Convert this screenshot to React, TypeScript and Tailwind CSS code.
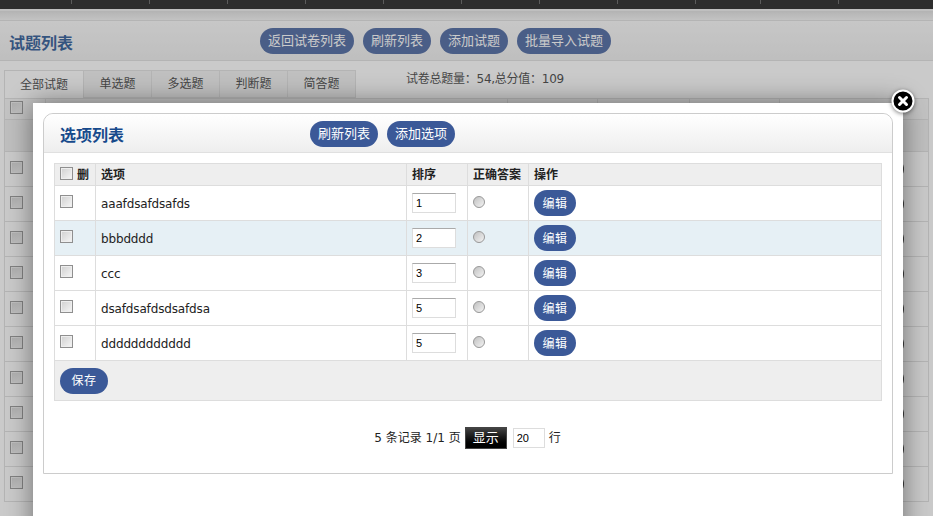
import React from "react";

const FONT = "[font-family:'DejaVu_Sans','Noto_Sans_CJK_SC',sans-serif]";

function Pill({ children, className = "" }: { children: React.ReactNode; className?: string }) {
  return (
    <button className={`h-[26px] rounded-[13px] bg-[#3b5998] px-2 leading-[26px] text-white ${className}`}>
      {children}
    </button>
  );
}

function Check() {
  return (
    <input
      type="checkbox"
      className="block h-[13px] w-[13px] appearance-none border border-[#8f8f8f] bg-gradient-to-br from-[#d0d0d0] to-[#f6f6f6] shadow-[inset_0_0_0_1px_#eee]"
    />
  );
}

function Radio() {
  return (
    <input
      type="radio"
      className="block h-[12px] w-[12px] appearance-none rounded-full border border-[#999] bg-gradient-to-br from-[#c0c0c0] to-[#f4f4f4]"
    />
  );
}

const options = [
  ["aaafdsafdsafds", "1"],
  ["bbbdddd", "2"],
  ["ccc", "3"],
  ["dsafdsafdsdsafdsa", "5"],
  ["dddddddddddd", "5"],
];

function Background() {
  const seps = [72, 78, 78, 78, 78, 78, 78, 78, 78, 65, 78];
  const heads = [41, 462, 90, 92, 90];
  return (
    <div className="h-[516px] overflow-hidden bg-white">
      <div className="flex h-[11px] border-b-2 border-b-[#eee] bg-[#0e0e0e]">
        {seps.map((w, i) => (
          <div key={i} className="h-[4px] border-r border-r-[#555]" style={{ width: w }} />
        ))}
      </div>
      <div className="h-[9px] bg-gradient-to-b from-[#dcdcdc] to-[#f4f4f4]" />
      <div className="flex h-[41px] items-center border-y border-y-[#ddd] bg-gradient-to-b from-[#fafafa] to-[#eee] pl-[9px] pt-[1px]">
        <h1 className="mt-[5px] w-[251px] text-[16px] font-bold text-[#174a8c]">试题列表</h1>
        <div className="flex gap-[9px] text-[13px]">
          <Pill>返回试卷列表</Pill>
          <Pill>刷新列表</Pill>
          <Pill>添加试题</Pill>
          <Pill>批量导入试题</Pill>
        </div>
      </div>
      <div className="flex h-[37px] items-end pl-[4px]">
        <div className="flex h-[28px] text-[12px] text-[#333]">
          <div className="flex w-[80px] items-center justify-center border border-b-0 border-[#ddd] bg-white">全部试题</div>
          {["单选题", "多选题", "判断题", "简答题"].map((t) => (
            <div key={t} className="flex w-[68px] items-center justify-center border border-l-0 border-[#ddd] bg-[#f0f0f0]">{t}</div>
          ))}
        </div>
        <div className="mb-[10px] ml-[50px] text-[12px] tracking-[-0.25px] text-[#333]">试卷总题量：54,总分值：109</div>
      </div>
      <div className="mx-[4px] border-x border-t border-[#ddd]">
        <div className="flex h-[21px] border-b border-b-[#ddd] bg-[#f4f4f4]">
          {heads.map((w, i) => (
            <div key={i} className="flex items-start border-r border-r-[#ddd] pl-[5px] pt-[2px]" style={{ width: w }}>
              {i === 0 ? <Check /> : null}
            </div>
          ))}
        </div>
        <div className="h-[32px] border-b border-b-[#ddd] bg-[#eee]" />
        {Array.from({ length: 10 }).map((_, i) => (
          <div key={i} className="flex h-[35px] items-center justify-between border-b border-b-[#ddd] pb-[3px] pl-[5px] pr-[24px]">
            <Check />
            <span className="mt-[3px] h-[22px] w-[40px] rounded-full bg-[#222]" />
          </div>
        ))}
      </div>
    </div>
  );
}

export default function App() {
  return (
    <div className={`relative h-[516px] w-[933px] overflow-hidden ${FONT}`}>
      <Background />
      <div className="absolute inset-0 bg-[#666]/35" />
      <div className="absolute left-[33px] top-[103px] h-[460px] w-[870px] bg-white p-[10px] shadow-[0_0_25px_rgba(0,0,0,0.45)]">
        <div className="h-[361px] rounded-t-[10px] border border-[#ccc]">
          <div className="flex h-[39px] items-center rounded-t-[10px] border-b border-b-[#e0e0e0] bg-gradient-to-b from-white to-[#eee] pl-[16px] pt-[1px]">
            <h2 className="mt-[5px] w-[250px] text-[16px] font-bold text-[#174a8c]">选项列表</h2>
            <div className="flex gap-[9px] text-[13px]">
              <Pill>刷新列表</Pill>
              <Pill>添加选项</Pill>
            </div>
          </div>
          <div className="px-[10px] pt-[10px]">
            <table className="w-[828px] table-fixed border-collapse text-[12px] text-[#222]">
              <colgroup>
                <col className="w-[41px]" />
                <col className="w-[311px]" />
                <col className="w-[61px]" />
                <col className="w-[61px]" />
                <col />
              </colgroup>
              <thead>
                <tr className="h-[22px] bg-[#eee] text-left">
                  <th className="border border-[#ddd] pl-[5px]">
                    <div className="flex items-center gap-[4px]">
                      <span className="-mt-[3px]"><Check /></span>
                      <span>删</span>
                    </div>
                  </th>
                  <th className="border border-[#ddd] pl-[5px]">选项</th>
                  <th className="border border-[#ddd] pl-[5px]">排序</th>
                  <th className="border border-[#ddd] pl-[5px]">正确答案</th>
                  <th className="border border-[#ddd] pl-[5px]">操作</th>
                </tr>
              </thead>
              <tbody>
                {options.map(([name, order], i) => (
                  <tr key={i} className={`h-[35px] ${i === 1 ? "bg-[#e6f0f5]" : "bg-white"}`}>
                    <td className="border border-[#ddd] pb-[4px] pl-[5px]"><Check /></td>
                    <td className="border border-[#ddd] pl-[5px] pt-[2px] tracking-[-0.15px]">{name}</td>
                    <td className="border border-[#ddd] pl-[5px]">
                      <input
                        readOnly
                        value={order}
                        className="block h-[20px] w-[44px] border border-[#ddd] border-t-[#aaa] bg-white pl-[3px] font-['Liberation_Sans',sans-serif] text-[11px] text-black"
                      />
                    </td>
                    <td className="border border-[#ddd] pb-[3px] pl-[5px]"><Radio /></td>
                    <td className="border border-[#ddd] pl-[5px]">
                      <Pill className="block w-[42px] !px-0 pt-[1px] text-[12px] tracking-[0.5px]">编辑</Pill>
                    </td>
                  </tr>
                ))}
                <tr className="h-[40px] bg-[#eee]">
                  <td colSpan={5} className="border border-[#ddd] pl-[5px]">
                    <Pill className="block w-[48px] !px-0 text-[12px] tracking-[0.5px]">保存</Pill>
                  </td>
                </tr>
              </tbody>
            </table>
            <div className="mt-[26px] flex items-center justify-center pr-[1px] text-[12px] text-[#222]">
              <span>5 条记录 1/1 页</span>
              <button className="ml-[4px] h-[22px] w-[42px] border border-[#444] bg-gradient-to-b from-[#444] to-black text-[13px] text-white">显示</button>
              <input readOnly value="20" className="ml-[6px] h-[20px] w-[32px] border border-[#ddd] bg-white pl-[3px] font-['Liberation_Sans',sans-serif] text-[11px] text-black" />
              <span className="ml-[4px]">行</span>
            </div>
          </div>
        </div>
      </div>
      <svg className="absolute left-[891px] top-[89px] drop-shadow-[0_1px_2px_rgba(0,0,0,0.5)]" width="24" height="24" viewBox="0 0 24 24">
        <circle cx="12" cy="12" r="10.5" fill="#000" stroke="#fff" strokeWidth="2" />
        <path d="M8.5 8.5 L15.5 15.5 M15.5 8.5 L8.5 15.5" stroke="#fff" strokeWidth="3" strokeLinecap="round" />
      </svg>
    </div>
  );
}
